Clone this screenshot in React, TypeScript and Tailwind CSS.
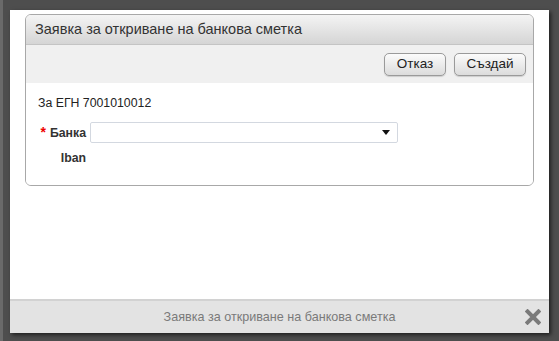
import React from "react";

const font = { fontFamily: '"Liberation Sans", Arial, sans-serif' };

function Btn({ label, w }: { label: string; w: string }) {
  return (
    <button
      className={`${w} h-[23px] rounded-[5px] border border-[#9a9a9a] bg-gradient-to-b from-[#fbfbfb] to-[#dcdcdc] text-[13.5px] text-[#222] shadow-[0_1px_1px_rgba(0,0,0,0.15)]`}
    >
      {label}
    </button>
  );
}

export default function App() {
  return (
    <div
      className="relative h-[341px] w-[559px] overflow-hidden bg-[#4e4e4e]"
      style={font}
    >
      {/* page behind overlay */}
      <div className="absolute left-0 top-0 h-full w-[3px] bg-[#6a6a6a]" />

      <div className="absolute left-[10px] top-[10px] flex h-[323px] w-[539px] flex-col bg-white shadow-[2px_2px_4px_rgba(0,0,0,0.6)]">
        <div className="mx-[15px] mt-[4px] overflow-hidden rounded-[6px] border border-[#a8a8a8]">
          {/* header */}
          <div className="flex h-[30px] items-center border-b border-[#c4c4c4] bg-gradient-to-b from-[#f4f4f4] to-[#d5d5d5] pl-[9px] text-[14.5px] text-[#333]">
            Заявка за откриване на банкова сметка
          </div>

          {/* toolbar */}
          <div className="flex h-[38px] items-center justify-end gap-[8px] bg-[#f0f0f0] pr-[7px]">
            <Btn label="Отказ" w="w-[62px]" />
            <Btn label="Създай" w="w-[72px]" />
          </div>

          {/* body */}
          <div className="h-[102px] bg-white pl-[12px] pt-[13px] text-[12.3px] text-[#222]">
            <div className="leading-[15px]">За ЕГН 7001010012</div>
            <div className="mt-[11px] flex items-center">
              <div className="w-[48px] whitespace-nowrap text-right font-bold text-[#333]">
                <span className="mr-[4px] text-[14px] text-[#e00]">*</span>Банка
              </div>
              <div className="ml-[4px] flex h-[21px] w-[308px] items-center justify-end rounded-[2px] border border-[#d3d8e0] bg-white pr-[7px]">
                <svg width="8" height="5" viewBox="0 0 8 5">
                  <path d="M0 0h8L4 5z" fill="#111" />
                </svg>
              </div>
            </div>
            <div className="mt-[6px] flex items-center">
              <div className="w-[48px] text-right font-bold text-[#333]">Iban</div>
            </div>
          </div>
        </div>

        {/* footer */}
        <div className="mt-auto flex h-[34px] items-center border-t-2 border-[#d2d2d2] bg-[#e3e3e3]">
          <div className="flex-1 pl-[24px] text-center text-[12.6px] text-[#7a7a7a]">
            Заявка за откриване на банкова сметка
          </div>
          <svg
            width="16"
            height="16"
            viewBox="0 0 16 16"
            className="mr-[8px]"
          >
            <path
              d="M2.5 2.5l11 11M13.5 2.5l-11 11"
              stroke="#7a7a7a"
              strokeWidth="4"
              strokeLinecap="square"
            />
          </svg>
        </div>
      </div>
    </div>
  );
}
